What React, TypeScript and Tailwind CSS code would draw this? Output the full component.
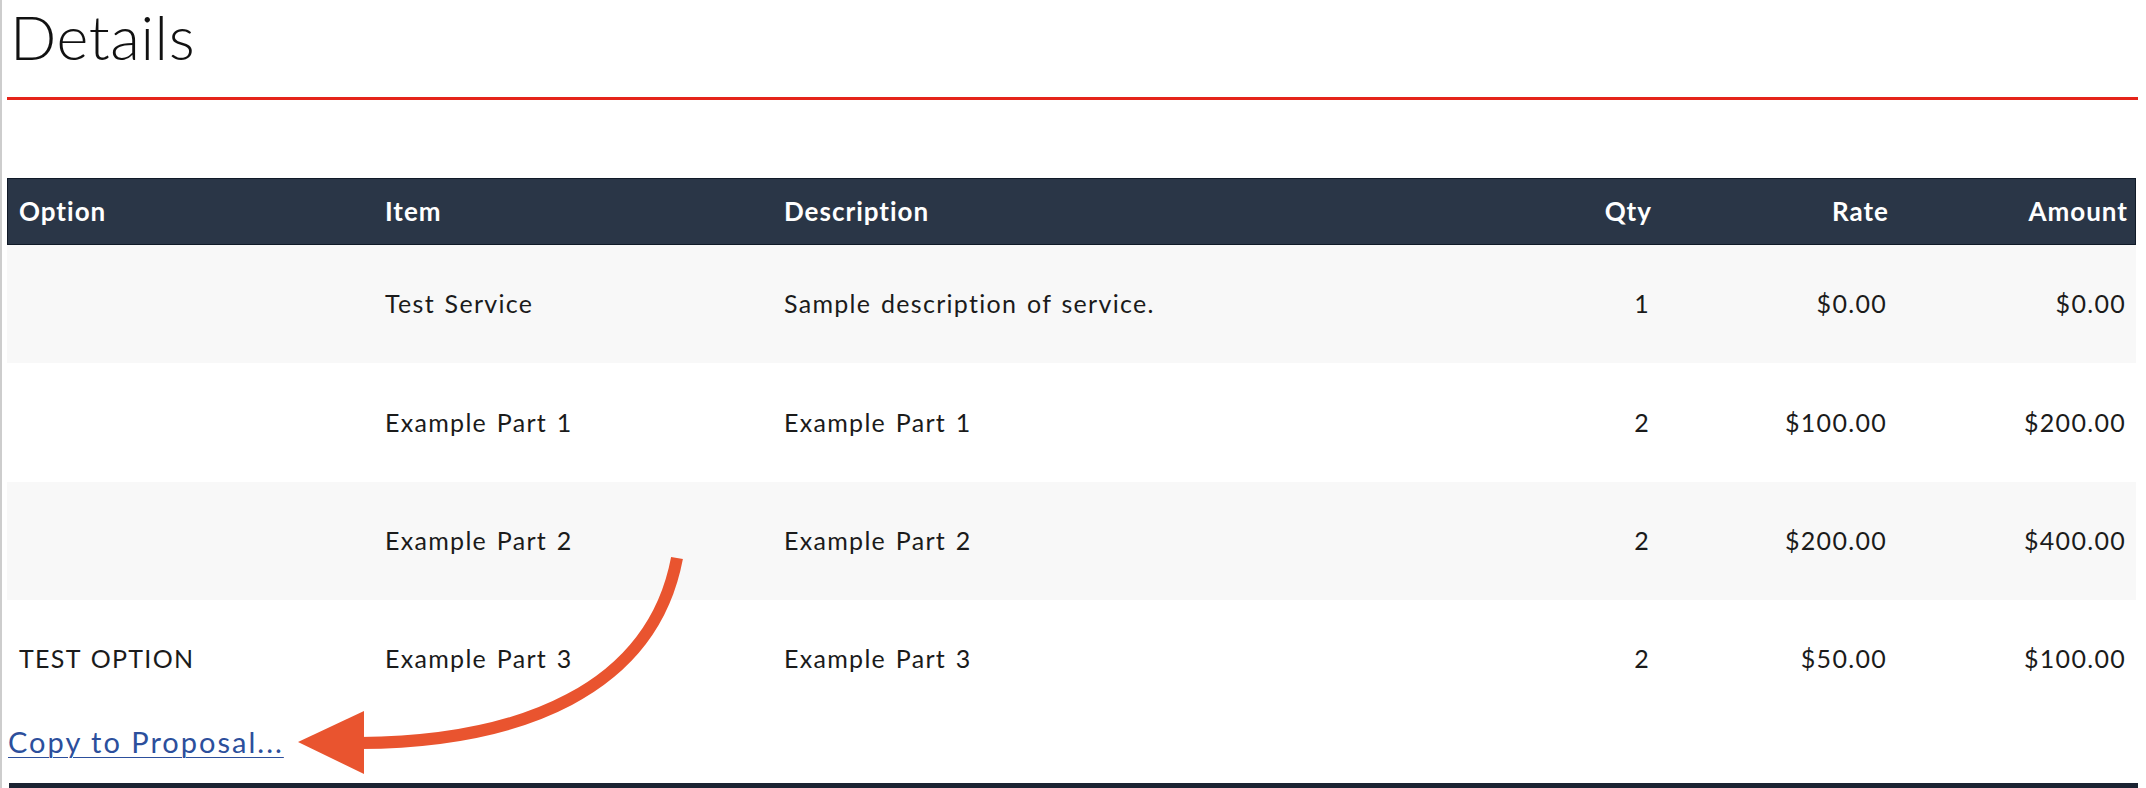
import React from "react";

const rows = [
  { option: "", item: "Test Service", desc: "Sample description of service.", qty: "1", rate: "$0.00", amount: "$0.00" },
  { option: "", item: "Example Part 1", desc: "Example Part 1", qty: "2", rate: "$100.00", amount: "$200.00" },
  { option: "", item: "Example Part 2", desc: "Example Part 2", qty: "2", rate: "$200.00", amount: "$400.00" },
  { option: "TEST OPTION", item: "Example Part 3", desc: "Example Part 3", qty: "2", rate: "$50.00", amount: "$100.00" },
];

const cols = "grid grid-cols-[366px_399px_678px_210px_237px_239px]";

export default function App() {
  return (
    <div className="relative w-[2146px] h-[788px] overflow-hidden bg-white font-['Lato','Liberation_Sans',sans-serif] text-[#1b1b1b]">
      <div className="flex h-full flex-col border-l-2 border-[#cdcdcd] pl-[5px] pr-[8px]">
        <h1 className="mt-[7px] pl-[3px] text-[61px] font-light tracking-[0.6px] leading-[60px] text-[#111]">Details</h1>
        <div className="mt-[30px] h-[3px] bg-[#e5241a]" />

        <div className="mt-[78px] w-[2129px]">
          <div className={`${cols} h-[67px] items-center border border-[#101a28] bg-[#2a3647] text-[26px] font-bold tracking-[1px] text-white`}>
            <div className="pl-[11px]">Option</div>
            <div className="pl-[11px]">Item</div>
            <div className="pl-[11px]">Description</div>
            <div className="pr-[9px] text-right">Qty</div>
            <div className="pr-[9px] text-right">Rate</div>
            <div className="pr-[9px] text-right">Amount</div>
          </div>
          {rows.map((r, i) => (
            <div
              key={i}
              className={`${cols} items-center text-[25px] tracking-[1.3px] [word-spacing:2px] ${i === 3 || i === 0 ? "h-[118px]" : "h-[118.5px]"} ${i % 2 === 0 ? "bg-[#f8f8f8]" : "bg-white"}`}
            >
              <div className="pl-[12px]">{r.option}</div>
              <div className="pl-[12px]">{r.item}</div>
              <div className="pl-[12px]">{r.desc}</div>
              <div className="pr-[10px] text-right">{r.qty}</div>
              <div className="pr-[10px] text-right">{r.rate}</div>
              <div className="pr-[10px] text-right">{r.amount}</div>
            </div>
          ))}
        </div>

        <div className="mt-[7px] pl-[1px] leading-[34px]">
          <a href="#" className="text-[29px] tracking-[2px] text-[#2c4f9c] underline underline-offset-[4px] decoration-1">
            Copy to Proposal...
          </a>
        </div>
        <div className="mt-auto ml-[2px] h-[5px] bg-[#1b2332]" />
      </div>

      <svg
        className="pointer-events-none absolute left-0 top-0"
        width="2146"
        height="788"
        viewBox="0 0 2146 788"
      >
        <path d="M 677 558 C 652 690, 520 742, 360 743" fill="none" stroke="#e9542f" strokeWidth="12" />
        <polygon points="298,742 364,711 364,774" fill="#e9542f" />
      </svg>
    </div>
  );
}
